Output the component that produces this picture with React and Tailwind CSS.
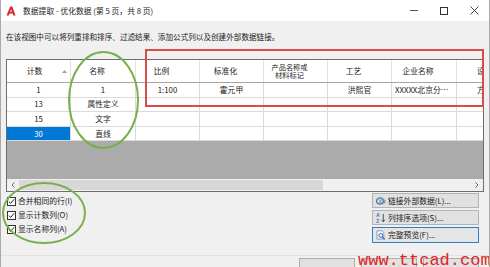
const cols = [
  { w: 'w-[64px]', head: '计数', sort: true },
  { w: 'w-[65px]', head: '名称' },
  { w: 'w-[64px]', head: '比例' },
  { w: 'w-[64px]', head: '标准化' },
  { w: 'w-[64px]', head: '产品名称或材料标记', two: true },
  { w: 'w-[64px]', head: '工艺' },
  { w: 'w-[65px]', head: '企业名称' },
  { w: 'w-[70px]', head: '设计者', last: true },
];

const rows = [
  ['1', '1', '1:100', '霍元甲', '', '洪熙官', 'XXXXX北京分…', '方案'],
  ['13', '属性定义', '', '', '', '', '', ''],
  ['15', '文字', '', '', '', '', '', ''],
  ['30', '直线', '', '', '', '', '', ''],
];

function Check({ label }) {
  return (
    <div className="h-[14px] flex items-center pl-[6px]">
      <div className="w-[9px] h-[9px] border border-[#333] bg-white flex items-center justify-center">
        <svg width="7" height="7" viewBox="0 0 7 7">
          <path d="M0.8 3.6 L2.7 5.4 L6.2 1.2" fill="none" stroke="#222" strokeWidth="1" />
        </svg>
      </div>
      <span className="ml-[2px] text-[7.8px] leading-none text-[#1a1a1a]">{label}</span>
    </div>
  );
}

function Btn({ icon, label, focus }) {
  return (
    <div
      className={
        focus
          ? 'w-[107px] h-[16px] border border-[#2f7fc4] bg-[#e5e5e5] flex items-center pl-[3px]'
          : 'w-[107px] h-[15px] border border-[#b4b4b4] bg-[#e1e1e1] flex items-center pl-[3px]'
      }
    >
      <div className="w-[10px] h-[10px] flex items-center justify-center">{icon}</div>
      <span className="ml-[2px] text-[7.8px] leading-none text-[#1a1a1a]">{label}</span>
    </div>
  );
}

const LinkIcon = (
  <svg width="10" height="10" viewBox="0 0 10 10">
    <ellipse cx="4" cy="5" rx="3.4" ry="3.2" fill="none" stroke="#3a7fc8" strokeWidth="1.3" />
    <ellipse cx="6.5" cy="5.5" rx="2.6" ry="1.7" fill="none" stroke="#8a8a8a" strokeWidth="1.1" />
    <path d="M2 3 Q4 4 6 2" fill="none" stroke="#7fb2e6" strokeWidth="0.8" />
  </svg>
);

const SortIcon = (
  <svg width="10" height="10" viewBox="0 0 10 10">
    <text x="0.3" y="4.4" fontSize="4.6" fill="#2c6fb8" fontFamily="Liberation Sans" fontWeight="bold">A</text>
    <text x="0.3" y="9.6" fontSize="4.6" fill="#2c6fb8" fontFamily="Liberation Sans" fontWeight="bold">Z</text>
    <path d="M7.3 1 L7.3 8.5 M5.6 6.8 L7.3 8.8 L9 6.8" fill="none" stroke="#444" strokeWidth="0.9" />
  </svg>
);

const PreviewIcon = (
  <svg width="10" height="10" viewBox="0 0 10 10">
    <path d="M1 0.8 H6 L7.8 2.6 V9 H1 Z" fill="#fff" stroke="#6d86a3" strokeWidth="0.8" />
    <circle cx="4.8" cy="5.4" r="2" fill="#dcebf8" stroke="#2a6db5" strokeWidth="0.9" />
    <path d="M6.2 6.9 L8.8 9.4" stroke="#2a6db5" strokeWidth="1.3" />
  </svg>
);

export default function App() {
  return (
    <div className="relative w-[490px] h-[267px] overflow-hidden bg-[#f0f0f0] border-l border-r border-[#a9a9a9] font-['Noto_Sans_CJK_SC','Liberation_Sans',sans-serif] text-[#1a1a1a]">
      {/* title bar */}
      <div className="h-[21px] bg-white flex items-center pl-[5px]">
        <svg width="10" height="10" viewBox="0 0 10 10">
          <path d="M0.5 9.5 L4.2 0.5 H6.3 L9.5 9.5 H7.3 L6.6 7.4 H3.6 L2.8 9.5 Z M4.2 5.7 H6 L5.1 2.9 Z" fill="#d8262c" fillRule="evenodd" />
        </svg>
        <span className="ml-[7px] text-[7.8px] leading-none">数据提取 - 优化数据 (第 5 页，共 8 页)</span>
        <div className="ml-auto flex items-center h-full">
          <div className="w-[30px] h-full flex items-center justify-center">
            <div className="w-[8px] h-[1px] bg-[#555]" />
          </div>
          <div className="w-[30px] h-full flex items-center justify-center">
            <div className="w-[8px] h-[8px] border border-[#333]" />
          </div>
          <div className="w-[30px] h-full flex items-center justify-center">
            <svg width="9" height="9" viewBox="0 0 9 9">
              <path d="M0.5 0.5 L8.5 8.5 M8.5 0.5 L0.5 8.5" stroke="#333" strokeWidth="0.9" />
            </svg>
          </div>
        </div>
      </div>

      {/* instruction */}
      <div className="mt-[10px] pl-[5px] h-[11px] flex items-center text-[7.6px] leading-none">
        在该视图中可以将列重排和排序、过滤结果、添加公式列以及创建外部数据链接。
      </div>

      {/* grid */}
      <div className="mt-[17px] ml-[5px] w-[478px] h-[133px] border border-[#6e6e6e] bg-[#ababab] flex flex-col overflow-hidden">
        <div className="flex h-[23px] shrink-0 bg-white border-b border-[#a6a6a6]">
          {cols.map((c, i) => (
            <div
              key={i}
              className={
                c.w +
                ' shrink-0 h-full border-r border-[#e1e1e1] flex items-center ' +
                (c.last ? 'justify-start pl-[20px]' : c.sort ? 'pr-[3px]' : 'justify-center pr-[12px]')
              }
            >
              {c.sort ? (
                <>
                  <span className="flex-1 text-center text-[7.8px] leading-none">{c.head}</span>
                  <svg width="5" height="3" viewBox="0 0 5 3">
                    <path d="M0 3 L2.5 0 L5 3 Z" fill="#a0a0a0" />
                  </svg>
                </>
              ) : c.two ? (
                <div className="flex flex-col items-center text-[7.2px] leading-[8.5px]">
                  <span>产品名称或</span>
                  <span>材料标记</span>
                </div>
              ) : (
                <span className="text-[7.8px] leading-none whitespace-nowrap">{c.head}</span>
              )}
            </div>
          ))}
        </div>
        {rows.map((r, ri) => (
          <div key={ri} className="flex h-[14.6px] shrink-0 bg-white border-b border-[#dadada]">
            {r.map((v, ci) => {
              const c = cols[ci];
              const sel = ri === 3 && ci === 0;
              return (
                <div
                  key={ci}
                  className={
                    c.w +
                    ' shrink-0 h-full border-r border-[#dadada] flex items-center overflow-hidden whitespace-nowrap text-[7.8px] leading-none ' +
                    (sel ? 'bg-[#0078d7] text-white justify-center ' : '') +
                    (c.last ? 'justify-start pl-[20px]' : ci === 6 ? 'justify-start pl-[3px]' : 'justify-center')
                  }
                >
                  {v}
                </div>
              );
            })}
          </div>
        ))}
        <div className="flex-1" />
        <div className="h-[12px] shrink-0 bg-[#f0f0f0] flex items-center">
          <div className="w-[12px] h-full flex items-center justify-center">
            <svg width="4" height="6" viewBox="0 0 4 6">
              <path d="M3.5 0.5 L1 3 L3.5 5.5" fill="none" stroke="#555" strokeWidth="0.9" />
            </svg>
          </div>
          <div className="w-[304px] h-[10px] bg-[#d8d8d8]" />
          <div className="flex-1" />
          <div className="w-[12px] h-full flex items-center justify-center">
            <svg width="4" height="6" viewBox="0 0 4 6">
              <path d="M0.5 0.5 L3 3 L0.5 5.5" fill="none" stroke="#555" strokeWidth="0.9" />
            </svg>
          </div>
        </div>
      </div>

      {/* options */}
      <div className="h-[63px] flex justify-between pr-[10px]">
        <div className="pt-[2px] flex flex-col">
          <Check label="合并相同的行(I)" />
          <Check label="显示计数列(O)" />
          <Check label="显示名称列(A)" />
        </div>
        <div className="pt-[1px] flex flex-col gap-[2px]">
          <Btn icon={LinkIcon} label="链接外部数据(L)..." />
          <Btn icon={SortIcon} label="列排序选项(S)..." />
          <Btn icon={PreviewIcon} label="完整预览(F)..." focus />
        </div>
      </div>

      {/* footer */}
      <div className="border-t border-[#e2e2e2] pt-[2px] pr-[10px] flex justify-end gap-[6px]">
        <div className="w-[56px] h-[22px] border border-[#adadad] bg-[#e1e1e1]" />
        <div className="w-[56px] h-[22px] border border-[#adadad] bg-[#e1e1e1]" />
        <div className="w-[56px] h-[22px] border border-[#adadad] bg-[#e1e1e1]" />
      </div>

      {/* annotations */}
      <div className="absolute left-[144px] top-[49px] w-[339px] h-[58px] border-2 border-[#d94c4c]" />
      <svg className="absolute left-0 top-0 pointer-events-none" width="490" height="267">
        <ellipse cx="102.5" cy="100" rx="34.5" ry="48" fill="none" stroke="#79b04c" strokeWidth="2" />
        <ellipse cx="43" cy="213" rx="41" ry="30" fill="none" stroke="#79b04c" strokeWidth="2" />
      </svg>
      <div className="absolute left-[357px] top-[252px] font-['Liberation_Mono',monospace] text-[17px] leading-[17px] text-[#e3241d]">
        www.ttcad.com
      </div>
    </div>
  );
}
